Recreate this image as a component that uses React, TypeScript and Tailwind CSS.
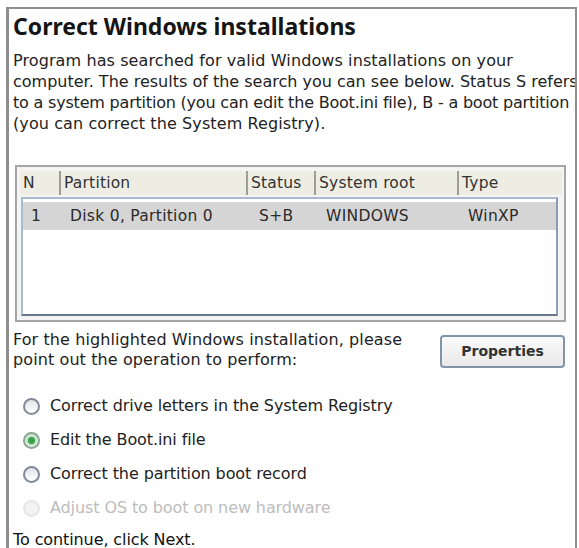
import React from "react";

const body = { fontFamily: '"DejaVu Sans", "Liberation Sans", sans-serif' };
const heading = { fontFamily: '"Noto Sans", "DejaVu Sans", sans-serif' };

const columns = [
    { label: "N", w: "w-[39px]" },
    { label: "Partition", w: "w-[187px]" },
    { label: "Status", w: "w-[68px]" },
    { label: "System root", w: "w-[143px]" },
    { label: "Type", w: "flex-1" },
];

const row = ["1", "Disk 0, Partition 0", "S+B", "WINDOWS", "WinXP"];

const options = [
    { label: "Correct drive letters in the System Registry", checked: false, disabled: false },
    { label: "Edit the Boot.ini file", checked: true, disabled: false },
    { label: "Correct the partition boot record", checked: false, disabled: false },
    { label: "Adjust OS to boot on new hardware", checked: false, disabled: true },
];

function Radio({ checked, disabled }: { checked: boolean; disabled: boolean }) {
    if (disabled) {
        return <div className="w-[17px] h-[17px] rounded-full border-2 border-[#e6e6e6] bg-[#f3f3f3]" />;
    }
    return (
        <div
            className={`w-[17px] h-[17px] rounded-full border-2 flex items-center justify-center bg-gradient-to-b from-[#e2e4ec] to-white ${
                checked ? "border-[#86a592]" : "border-[#838a97]"
            }`}
        >
            {checked && (
                <div className="w-[7px] h-[7px] rounded-full bg-[#3aa14c] ring-2 ring-[#bfe3c4]" />
            )}
        </div>
    );
}

export default function App() {
    return (
        <div className="w-[579px] h-[548px] bg-white overflow-hidden text-[#222]" style={body}>
            <div className="ml-[6px] mt-[7px] mr-[2px] h-[560px] border-t-2 border-l-[3px] border-r-2 border-[#8e8e8e] pl-[4px] overflow-hidden">
                <h1
                    className="text-[23px] font-bold leading-[30px] pt-[2px] text-[#151515] whitespace-nowrap"
                    style={heading}
                >
                    Correct Windows installations
                </h1>
                <p className="text-[16px] leading-[21px] mt-[9px] whitespace-nowrap">
                    <span className="tracking-[0.1px]">
                        Program has searched for valid Windows installations on your
                    </span>
                    <br />
                    <span className="tracking-[0px]">
                        computer. The results of the search you can see below. Status S refers
                    </span>
                    <br />
                    <span className="tracking-[-0.2px]">
                        to a system partition (you can edit the Boot.ini file), B - a boot partition
                    </span>
                    <br />
                    <span className="tracking-[0.1px]">(you can correct the System Registry).</span>
                </p>
                <div className="mt-[31px] ml-[2px] w-[551px] h-[157px] border-2 border-[#a6a6a6] bg-[#f4f4f4] pt-[4px] pl-[3px] pr-[2px] pb-[4px] flex flex-col">
                    <div className="flex h-[24px] bg-[#eeede3] text-[15.5px] leading-[24px] tracking-[0.2px] text-[#333]">
                        {columns.map((c, i) => (
                            <div
                                key={c.label}
                                className={`${c.w} pl-[3px] ${i > 0 ? "border-l-2 border-[#9d9d96]" : ""}`}
                            >
                                {c.label}
                            </div>
                        ))}
                    </div>
                    <div className="mt-[2px] flex-1 ml-[1px] mr-[4px] border-2 border-[#a9bccf] border-b-[#66788d] border-r-[#8a9fb5] bg-white pt-[3px]">
                        <div className="flex h-[28px] bg-[#d5d5d5] text-[15.5px] leading-[28px] tracking-[0.3px] text-[#2a2a2a]">
                            <div className="w-[47px] pl-[8px]">{row[0]}</div>
                            <div className="w-[189px]">{row[1]}</div>
                            <div className="w-[67px]">{row[2]}</div>
                            <div className="w-[142px]">{row[3]}</div>
                            <div className="flex-1">{row[4]}</div>
                        </div>
                    </div>
                </div>
                <div className="flex justify-between w-[553px] mt-[7px]">
                    <p className="text-[16px] leading-[20px] tracking-[0.1px] pt-[1px] whitespace-nowrap">
                        For the highlighted Windows installation, please
                        <br />
                        point out the operation to perform:
                    </p>
                    <button className="mt-[6px] mr-[1px] w-[125px] h-[33px] rounded-[4px] border-2 border-[#8294a8] bg-gradient-to-b from-[#fafafa] to-[#e9e9e9] text-[14px] font-semibold text-[#333]">
                        Properties
                    </button>
                </div>
                <div className="mt-[26px] ml-[10px] flex flex-col gap-[14px]">
                    {options.map((o) => (
                        <div key={o.label} className="flex items-center gap-[10px] h-[20px]">
                            <Radio checked={o.checked} disabled={o.disabled} />
                            <span
                                className={`text-[16px] tracking-[-0.1px] whitespace-nowrap ${
                                    o.disabled ? "text-[#bdbdbd]" : "text-[#222]"
                                }`}
                            >
                                {o.label}
                            </span>
                        </div>
                    ))}
                </div>
                <p className="mt-[12px] text-[16px] leading-[20px] tracking-[-0.1px] text-[#111]">
                    To continue, click Next.
                </p>
            </div>
        </div>
    );
}
